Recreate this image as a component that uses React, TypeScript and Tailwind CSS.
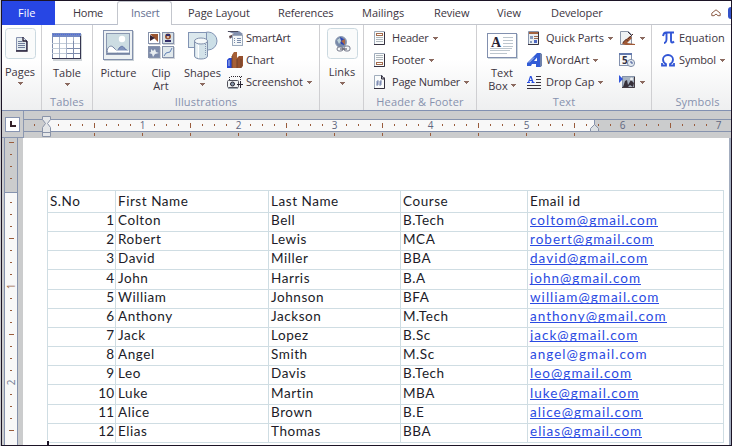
import React from "react";

const Arrow = ({ className = "" }: { className?: string }) => (
  <svg width="5" height="3" viewBox="0 0 5 3" shapeRendering="crispEdges" className={`shrink-0 ${className}`}>
    <path d="M0 0h5v1H0zM1 1h3v1H1zM2 2h1v1H2z" fill="#8b6a60" />
  </svg>
);

/* ---------- icons ---------- */
const PagesIcon = () => (
  <svg width="31" height="31" viewBox="0 0 31 31">
    <rect x=".5" y=".5" width="30" height="30" rx="3" fill="#fafbfb" stroke="#cbd9e0" />
    <path d="M11.5 9.5h7l3 3v10h-10z" fill="#e4ecef" stroke="#8792b0" />
    <path d="M18 9v4h4M22 13v10H11" fill="none" stroke="#241c35" strokeWidth="1.3" />
    <path d="M13 13.5h4M13 15.5h7M13 17.5h7M13 19.5h7" stroke="#6f7c9c" />
  </svg>
);
const TableIcon = () => (
  <svg width="30" height="28" viewBox="0 0 30 28">
    <rect x="1" y="1" width="29" height="27" fill="#cfd4d8" />
    <rect x=".5" y=".5" width="28" height="25" fill="#fff" stroke="#7e8cad" />
    <rect x="0" y="0" width="29" height="4" fill="#7187c4" />
    <path d="M1 1.5h27" stroke="#4f6ade" strokeDasharray="1 1" />
    <path d="M0 10.5h29M0 15.5h29M0 20.5h29" stroke="#c2ccd8" />
    <path d="M7.5 4v22M14.5 4v22M21.5 4v22" stroke="#aab5ca" />
    <path d="M15 15.5h13M15 20.5h13M21.5 8v17" stroke="#7e8cad" />
    <path d="M0 25.5h29M28.5 3v23" stroke="#373752" />
  </svg>
);
const PictureIcon = () => (
  <svg width="31" height="31" viewBox="0 0 31 31">
    <rect x="1" y="1" width="30" height="30" fill="#c9d0d5" />
    <rect x=".5" y=".5" width="29" height="29" fill="#edf1f3" stroke="#8390ad" />
    <rect x="3.5" y="3.5" width="23" height="21" fill="#ccdce2" stroke="#8996b0" />
    <circle cx="19" cy="9" r="3.2" fill="#fff" />
    <path d="M4 22c0-5 4-8 7-4 2 2 3 3 4 4z" fill="#fff" stroke="#7583a2" />
    <path d="M14 22c3-7 6-7 8-3 2 1 3 2 4 3z" fill="#8193bd" stroke="#6174a5" />
    <path d="M5 21.5h21" stroke="#fff" strokeWidth="2" />
    <path d="M4 23.5h23" stroke="#7583a2" />
  </svg>
);
const ClipIcon = () => (
  <svg width="27" height="28" viewBox="0 0 27 28">
    <path d="M1 1h12v12H1zM15 1h12v12H15zM1 15h12v12H1zM15 15h12v12H15z" fill="#d1d5d9" />
    <rect x=".5" y=".5" width="11" height="11" fill="#fff" stroke="#8692ab" />
    <path d="M2 2h8v8z" fill="#9b542f" /><path d="M2 3l5 3-5 3z" fill="#342335" />
    <rect x="14.5" y=".5" width="11" height="11" fill="#d7e2e8" stroke="#8692ab" />
    <circle cx="20" cy="4.5" r="3" fill="#9b5938" /><path d="M18 2h4v2h-4zM17 10V8h6v2z" fill="#342d68" />
    <circle cx="20" cy="5" r="1" fill="#e7d8d1" />
    <rect x=".5" y="14.5" width="11" height="11" fill="#7d8baa" stroke="#8692ab" />
    <path d="M3 17l2 2 2-2 1 3 3 1-4 1-2 3-1-3-3-1 2-1z" fill="#e8edf0" />
    <rect x="14.5" y="14.5" width="11" height="11" fill="#e1e9ec" stroke="#8692ab" />
    <path d="M16 24l2-3 4-1 2-4" fill="none" stroke="#6282b7" />
  </svg>
);
const ShapesIcon = () => (
  <svg width="30" height="30" viewBox="0 0 30 30">
    <circle cx="20" cy="10" r="9" fill="#ccdfe7" stroke="#8294b4" />
    <rect x=".5" y="1.5" width="18" height="15" fill="#dbe8ed" stroke="#8294b4" />
    <path d="M6.500 10v15c0 4 13 4 13 0V10z" fill="#d3e2e9" stroke="#8191ad" />
    <path d="M9 13v13M10.500 14v13" stroke="#fff" />
    <path d="M17.500 13v12" stroke="#8798b4" strokeDasharray="1 1" />
    <ellipse cx="13" cy="10" rx="6.500" ry="3" fill="#f5f9fa" stroke="#8191ad" />
  </svg>
);
const SmartArtIcon = () => (
  <svg width="17" height="17" viewBox="0 0 17 17">
    <path d="M0 1h12l4 3-4 4H2l5-4z" fill="#8290ad" /><path d="M1 1.500h10" stroke="#4a4a5c" />
    <path d="M2 6l5-2-4 5z" fill="#624a4b" />
    <rect x="5.500" y="5.500" width="10" height="10" fill="#f4f7f8" stroke="#9ba9bc" />
    <path d="M7 8.500h1M10 8.500h4M7 10.500h1M10 10.500h4M7 12.500h1M10 12.500h4" stroke="#7a8bab" />
  </svg>
);
const ChartIcon = () => (
  <svg width="17" height="17" viewBox="0 0 17 17">
    <path d="M0 8l2-2h3v10H0z" fill="#2949d4" /><path d="M1 8h2v6H1z" fill="#6f86dd" />
    <path d="M5 3l2-3h3v16H5z" fill="#a65f36" /><path d="M10 6l2-2h4v10l-2 2h-4z" fill="#96502d" />
    <path d="M5 4v12M10 7v9M14 7v9" stroke="#70432f" />
  </svg>
);
const ScreenshotIcon = () => (
  <svg width="17" height="17" viewBox="0 0 17 17">
    <path d="M4 2.500h12M2.500 3v4M13.500 3v4" stroke="#2e2931" strokeDasharray="1 1" />
    <rect x=".5" y="6.500" width="11" height="7" rx="1" fill="#f0f3f4" stroke="#52525d" />
    <circle cx="5.500" cy="10" r="2" fill="#899cae" stroke="#292532" />
    <path d="M10 10.500h6M13.500 7v7" stroke="#292532" />
    <path d="M1 14.500h10" stroke="#9ba6af" />
  </svg>
);
const LinksIcon = () => (
  <svg width="31" height="31" viewBox="0 0 31 31">
    <rect x=".5" y=".5" width="30" height="30" rx="3" fill="#fafbfb" stroke="#cbd9e0" />
    <circle cx="14" cy="14" r="5.500" fill="#7789a9" stroke="#8d9bb3" />
    <path d="M13 9l5 3-1 5-3-1z" fill="#2943b6" /><path d="M14 13l4-2v6z" fill="#ab6845" />
    <path d="M10 12l3-2 1 3-2 3z" fill="#bed3da" />
    <rect x="10" y="19" width="6" height="4" rx="2" fill="#f3f5f6" stroke="#75798b" />
    <rect x="17" y="18" width="6" height="5" rx="2" fill="#f3f5f6" stroke="#75798b" />
    <path d="M13 21h7" stroke="#494757" />
  </svg>
);
const DocIcon = ({ kind }: { kind: "header" | "footer" | "number" }) => (
  <svg width="12" height="15" viewBox="0 0 12 15">
    <path d="M.5.500h10v13H.5z" fill="#fafcfc" stroke="#a1adbc" />
    <path d="M10.500 1v12.500H0" fill="none" stroke="#34303f" />
    {kind === "header" && <><rect x="2.500" y="2.500" width="6" height="2" fill="#fff" stroke="#a46d4f" /><path d="M2 6.500h7M2 8.500h7M2 10.500h7" stroke="#afb7bd" /></>}
    {kind === "footer" && <><rect x="2.500" y="9.500" width="6" height="2" fill="#fff" stroke="#a46d4f" /><path d="M2 2.500h7M2 4.500h7M2 6.500h7" stroke="#afb7bd" /></>}
    {kind === "number" && <><path d="M8 0h4v4z" fill="#fff" /><path d="M7.500.5l3 3.500h-3z" fill="#bbc2cc" stroke="#34303f" /><path d="M4 5L3 11M7 5L6 11M2 7h6M2 9h6" stroke="#7080ab" strokeWidth=".9" /></>}
  </svg>
);
const QuickIcon = () => (
  <svg width="12" height="15" viewBox="0 0 12 15">
    <path d="M.5.500h10v13H.5z" fill="#e9eef2" stroke="#8995ac" /><path d="M1 2h9" stroke="#a3623f" strokeWidth="2" />
    <path d="M2 5h3v3H2zM2 10h2v2H2z" fill="#8a9bbb" /><path d="M6 5.500h4M6 7.500h4" stroke="#9a684d" />
    <path d="M6 9h3v3H6z" fill="#4d65be" /><path d="M10.500 1v12.500H0" fill="none" stroke="#38323f" />
  </svg>
);
const WordArtIcon = () => (
  <svg width="17" height="16" viewBox="0 0 17 16">
    <path fillRule="evenodd" d="M0 11L10 1h4v14H9v-3H5l-1 2H0zM7 9h3V5.500z" fill="#315bd6" />
    <path d="M13 1l2 1v12l-2 1" fill="#6e81ab" /><path d="M2 10.500l5-5" stroke="#bed0e7" />
  </svg>
);
const DropCapIcon = () => (
  <svg width="15" height="15" viewBox="0 0 15 15">
    <path fillRule="evenodd" d="M0 8V7h1l2-6h1.500l2 6h1v1H4.500V7H5l-.3-1H2.500L2.300 7H3v1zM2.800 5h1.700l-.8-2.600z" fill="#294ee0" />
    <path d="M9 1.500h5M9 4.500h5M9 7.500h5M0 10.500h14M0 13.500h14" stroke="#38323d" />
  </svg>
);
const TextBoxIcon = () => (
  <svg width="31" height="26" viewBox="0 0 31 26">
    <rect x="1" y="1" width="30" height="25" fill="#cbd6dc" />
    <rect x=".5" y=".5" width="29" height="24" fill="#fff" stroke="#8290af" />
    <text x="4" y="13.500" fontFamily="Liberation Serif, serif" fontWeight="bold" fontSize="14" fill="#282334">A</text>
    <path d="M16 4.500h10M16 7.500h10M16 10.500h10M16 13.500h10M3 15.500h22M3 17.500h20M3 20.500h17" stroke="#bcc6ce" />
  </svg>
);
const SignatureIcon = () => (
  <svg width="17" height="15" viewBox="0 0 17 15">
    <path d="M1.500.5h8l3 3v10h-11z" fill="#eef2f4" stroke="#8c98aa" /><path d="M9 1l4 4" stroke="#37313e" />
    <path d="M5 10l6-5 2 2-5 5 8 1v1H7l-4-1z" fill="#a05935" /><path d="M4 12c2-4 4-4 5-2M9 8l5-5" stroke="#51312b" fill="none" />
  </svg>
);
const DateIcon = () => (
  <svg width="17" height="16" viewBox="0 0 17 16">
    <rect x=".5" y="1.500" width="12" height="12" fill="#f8fafb" stroke="#8391ae" /><path d="M0 2h13" stroke="#6379ad" strokeWidth="2" />
    <text x="3" y="12" fontFamily="Noto Sans, sans-serif" fontWeight="bold" fontSize="10" fill="#353142">5</text>
    <circle cx="12" cy="11" r="3.600" fill="#e3eaf0" stroke="#7e8ca8" /><path d="M12 9v2h2" stroke="#435798" fill="none" />
  </svg>
);
const ObjectIcon = () => (
  <svg width="17" height="15" viewBox="0 0 17 15">
    <rect x="3.500" y="1.500" width="12" height="11" fill="#a7b3c1" stroke="#8592a8" />
    <path d="M4 12l2-6 2-1 1 5 3-5 3 3-1 4-3-2-2 2z" fill="#38313b" /><circle cx="12.500" cy="4" r="1.500" fill="#eef0f1" />
    <path d="M0 0l4 4-4 4z" fill="#3155dc" /><path d="M3 12.500h12.500V2" fill="none" stroke="#443b42" />
  </svg>
);
const PiIcon = () => (
  <svg width="13" height="14" viewBox="0 0 13 14">
    <path d="M1 5c.5-2.500 1.500-3.500 3-3.500h8M4.500 2v6c0 2-1 4-2.500 4M9 2v8c0 2 1.500 2 3 .5" fill="none" stroke="#3155d5" strokeWidth="1.900" />
  </svg>
);
const OmegaIcon = () => (
  <svg width="14" height="13" viewBox="0 0 14 13">
    <path d="M1 9v2.500h4V10C3 9 2 7.500 2 5.500 2 3 4 1 7 1s5 2 5 4.500c0 2-1 3.500-3 4.500v1.500h4V9" fill="none" stroke="#3155d5" strokeWidth="1.800" />
  </svg>
);
const CollapseIcon = () => (
  <svg width="10" height="8" viewBox="0 0 10 8"><path d="M.8 4.200L5 .8l4.200 3.400v2.500H7L5 5 3 6.700H.8z" fill="#fff" stroke="#8b5a44" /></svg>
);

/* ---------- ribbon pieces ---------- */
const Group = ({ w, label, children, last = false }: { w: string; label?: string; children: React.ReactNode; last?: boolean }) => (
  <section className={`flex h-full shrink-0 flex-col ${w} ${last ? "" : "border-r border-[#cfcfd2]"}`}>
    <div className="flex h-[70px] items-start">{children}</div>
    <div className="h-4 text-center leading-[15px] tracking-[0.15px] whitespace-nowrap text-[#8791ae]">{label}</div>
  </section>
);

const Big = ({ w, pt, icon, iconH, lines, arrow, inlineArrow }: { w: string; pt: string; icon: React.ReactNode; iconH: string; lines: string[]; arrow?: boolean; inlineArrow?: boolean }) => (
  <div className={`flex shrink-0 flex-col items-center ${w} ${pt}`}>
    <div className={iconH}>{icon}</div>
    {lines.map((l, i) => (
      <div key={l} className="flex h-[13px] items-center gap-[3px] leading-[13px] whitespace-nowrap">
        {l}{inlineArrow && i === lines.length - 1 && <Arrow />}
      </div>
    ))}
    {arrow && <Arrow className="mt-[4px]" />}
  </div>
);

const Small = ({ icon, iconW, label, arrow, track = "" }: { icon: React.ReactNode; iconW: string; label?: string; arrow?: boolean; track?: string }) => (
  <div className="flex h-[22px] items-center whitespace-nowrap">
    <span className={`shrink-0 ${iconW}`}>{icon}</span>
    {label && <span className={track}>{label}</span>}
    {arrow && <Arrow className="ml-[4px]" />}
  </div>
);

const tabs: [string, string, string][] = [
  ["Page Layout", "w-[90px]", "tracking-[-0.05px]"],
  ["References", "w-[84px]", "tracking-[-0.15px]"],
  ["Mailings", "w-[72px]", ""],
  ["Review", "w-[63px]", "tracking-[-0.1px]"],
  ["View", "w-[54px]", ""],
  ["Developer", "w-[160px]", "tracking-[-0.1px]"],
];

const Ruler = () => {
  const marks: React.ReactNode[] = [];
  for (let i = -1; i <= 56; i++) {
    const x = 22.5 + i * 12;
    if (i === 0) continue;
    if (i > 0 && i % 8 === 0) marks.push(<text key={i} x={x} y="18" textAnchor="middle" fontSize="10" fill="#5f667f">{i / 8}</text>);
    else marks.push(<path key={i} d={i % 4 === 0 ? `M${x} 12v5` : `M${x} 13v2`} stroke="#995c3c" />);
    if (i > 0 && i % 4 === 0 && i < 46) marks.push(<path key={`b${i}`} d={`M${x} 22v3`} stroke="#995c3c" />);
  }
  return (
    <svg width="707" height="27" viewBox="0 0 707 27" className="font-['Open_Sans',sans-serif]">
      <rect width="707" height="27" fill="#cbcccd" />
      <rect x="22" y="8" width="548" height="12" fill="#f8f8f8" />
      <path d="M0 8.500h707M0 20.500h707M570.500 8v8" stroke="#8693ae" />
      {marks}
      <path d="M18.500 5.500h8v3l-3 4 3 4v9h-8v-9l3-4-3-4z" fill="#e5e7e9" stroke="#8993a8" />
      <path d="M19 21.500h7" stroke="#8993a8" />
      <path d="M566.500 20.500v-3l4-4 4 4v3z" fill="#dce0e3" stroke="#8993a8" />
    </svg>
  );
};

const SideRuler = () => {
  const marks: React.ReactNode[] = [];
  for (let i = 0; i <= 24; i++) {
    const y = 4.5 + i * 12;
    if (i === 4) continue;
    if (i === 12 || i === 20)
      marks.push(<text key={i} transform={`translate(13 ${y}) rotate(-90)`} textAnchor="middle" fontSize="10" fill={i === 12 ? "#9b684d" : "#6f7890"}>{i === 12 ? 1 : 2}</text>);
    else marks.push(<path key={i} d={i % 4 === 0 ? `M7 ${y}h5` : `M8 ${y}h2`} stroke="#995c3c" />);
  }
  return (
    <svg width="21" height="307" viewBox="0 0 21 307" className="shrink-0 font-['Open_Sans',sans-serif]">
      <rect width="21" height="307" fill="#cbcccd" />
      <rect x="3" y="55" width="12" height="252" fill="#f8f8f8" />
      <path d="M2.500 0v307M15.500 0v307M3 54.500h12" stroke="#8693ae" />
      {marks}
    </svg>
  );
};

const rows: string[][] = [
  ["S.No", "First Name", "Last Name", "Course", "Email id"],
  ["1", "Colton", "Bell", "B.Tech", "coltom@gmail.com"],
  ["2", "Robert", "Lewis", "MCA", "robert@gmail.com"],
  ["3", "David", "Miller", "BBA", "david@gmail.com"],
  ["4", "John", "Harris", "B.A", "john@gmail.com"],
  ["5", "William", "Johnson", "BFA", "william@gmail.com"],
  ["6", "Anthony", "Jackson", "M.Tech", "anthony@gmail.com"],
  ["7", "Jack", "Lopez", "B.Sc", "jack@gmail.com"],
  ["8", "Angel", "Smith", "M.Sc", "angel@gmail.com"],
  ["9", "Leo", "Davis", "B.Tech", "leo@gmail.com"],
  ["10", "Luke", "Martin", "MBA", "luke@gmail.com"],
  ["11", "Alice", "Brown", "B.E", "alice@gmail.com"],
  ["12", "Elias", "Thomas", "BBA", "elias@gmail.com"],
];

export default function App() {
  return (
    <div className="h-[446px] w-[732px] overflow-hidden bg-[#c9cbce] pl-px font-['Open_Sans',sans-serif] text-[11px] text-[#3c3440]">
      <div className="flex h-full w-[731px] flex-col overflow-hidden border border-[#1c1426] bg-white">
        <nav className="flex h-6 shrink-0 items-stretch leading-[24px] whitespace-nowrap">
          <div className="w-[53px] bg-[#2746e4] pl-4 text-white">File</div>
          <div className="w-[62px] border-b border-[#b7bdcb] pl-[18px] tracking-[-0.3px]">Home</div>
          <div className="w-[55px] rounded-t-[3px] border-x border-t border-[#c3c6cd] pl-[13px] leading-[22px] tracking-[-0.2px] text-[#667092]">Insert</div>
          <div className="flex flex-1 border-b border-[#c3c6cd] pl-[16px]">
            {tabs.map(([t, w, k]) => <div key={t} className={`shrink-0 ${w} ${k}`}>{t}</div>)}
            <div className="flex w-5 shrink-0 items-center justify-between overflow-hidden"><CollapseIcon /><span className="h-3 w-[3px] rounded-l-full bg-[#3452c8]" /></div>
          </div>
        </nav>

        <div className="flex h-[86px] shrink-0 border-b border-[#8190b2] bg-linear-to-b from-white from-40% to-[#eeeff0]">
          <Group w="w-[40px]">
            <Big w="w-[36px]" pt="pt-[3px]" iconH="h-[37px]" icon={<PagesIcon />} lines={["Pages"]} arrow />
          </Group>
          <Group w="w-[51px]" label="Tables">
            <Big w="w-[50px]" pt="pt-[8px]" iconH="h-[33px]" icon={<TableIcon />} lines={["Table"]} arrow />
          </Group>
          <Group w="w-[227px]" label="Illustrations">
            <Big w="w-[51px]" pt="pt-[5px]" iconH="h-[36px]" icon={<PictureIcon />} lines={["Picture"]} />
            <Big w="w-[34px]" pt="pt-[7px]" iconH="h-[34px]" icon={<ClipIcon />} lines={["Clip", "Art"]} />
            <Big w="w-[49px]" pt="pt-[6px]" iconH="h-[35px]" icon={<ShapesIcon />} lines={["Shapes"]} arrow />
            <div className="flex flex-col pt-[2px]">
              <Small iconW="w-[19px]" icon={<SmartArtIcon />} label="SmartArt" track="tracking-[-0.2px]" />
              <Small iconW="w-[19px]" icon={<ChartIcon />} label="Chart" />
              <Small iconW="w-[19px]" icon={<ScreenshotIcon />} label="Screenshot" track="tracking-[-0.05px]" arrow />
            </div>
          </Group>
          <Group w="w-[44px]">
            <Big w="w-[44px]" pt="pt-[3px]" iconH="h-[37px]" icon={<LinksIcon />} lines={["Links"]} arrow />
          </Group>
          <Group w="w-[113px]" label="Header & Footer">
            <div className="flex flex-col pt-[2px] pl-[10px]">
              <Small iconW="w-[18px]" icon={<DocIcon kind="header" />} label="Header" track="tracking-[-0.2px]" arrow />
              <Small iconW="w-[18px]" icon={<DocIcon kind="footer" />} label="Footer" track="tracking-[-0.1px]" arrow />
              <Small iconW="w-[18px]" icon={<DocIcon kind="number" />} label="Page Number" track="tracking-[-0.2px]" arrow />
            </div>
          </Group>
          <Group w="w-[175px]" label="Text">
            <Big w="w-[50px]" pt="pt-[8px]" iconH="h-[33px]" icon={<TextBoxIcon />} lines={["Text", "Box"]} inlineArrow />
            <div className="flex w-[92px] flex-col pt-[2px]">
              <Small iconW="w-[19px] pl-px" icon={<QuickIcon />} label="Quick Parts" track="tracking-[-0.05px]" arrow />
              <Small iconW="w-[19px]" icon={<WordArtIcon />} label="WordArt" arrow />
              <Small iconW="w-[19px]" icon={<DropCapIcon />} label="Drop Cap" arrow />
            </div>
            <div className="flex flex-col pt-[2px]">
              <Small iconW="w-[17px]" icon={<SignatureIcon />} arrow />
              <Small iconW="w-[17px]" icon={<DateIcon />} />
              <Small iconW="w-[17px]" icon={<ObjectIcon />} arrow />
            </div>
          </Group>
          <Group w="w-[91px]" label="Symbols" last>
            <div className="flex flex-col pt-[2px] pl-[9px]">
              <Small iconW="w-[18px] pl-px" icon={<PiIcon />} label="Equation" />
              <Small iconW="w-[18px]" icon={<OmegaIcon />} label="Symbol" track="tracking-[-0.15px]" arrow />
            </div>
          </Group>
        </div>

        <div className="flex h-[27px] shrink-0 bg-[#cbcccd]">
          <div className="flex h-[27px] w-[22px] shrink-0 items-center justify-center border-r border-b border-[#8b97b0]">
            <div className="flex size-[15px] items-center justify-center border border-[#8794b1] bg-white">
              <span className="size-[6px] border-b-2 border-l-2 border-[#35222a]" />
            </div>
          </div>
          <Ruler />
        </div>

        <main className="flex min-h-0 flex-1">
          <SideRuler />
          <div className="flex min-w-0 flex-1 flex-col border-r-2 border-[#a3adbf] pt-[52px] pl-[24px]">
            <div className="w-[677px] shrink-0 border-t border-l border-[#cfdde3] font-[Lato,sans-serif] text-[13.5px] tracking-[0.55px] text-[#201b28]">
              {rows.map((r, i) => (
                <div key={r[0]} className={`grid grid-cols-[68px_153px_132px_127px_196px] leading-[21px] whitespace-nowrap ${i === 3 || i === 9 ? "h-[20px]" : "h-[19px]"}`}>
                  {r.map((c, j) => (
                    <div key={j} className={`overflow-visible border-r border-b border-[#cfdde3] pl-[2px] ${j === 0 && i > 0 ? "pr-px text-right tracking-[0px]" : ""}`}>
                      {j === 4 && i > 0 ? <span className={`inline-block h-[17px] tracking-[1.02px] text-[#2b4be2] ${i === 8 ? "" : "border-b border-[#2b4be2]"}`}>{c}</span> : c}
                    </div>
                  ))}
                </div>
              ))}
            </div>
            <span className="mt-px h-[5px] w-[2px] shrink-0 bg-[#1c1426]" />
          </div>
        </main>
      </div>
    </div>
  );
}
